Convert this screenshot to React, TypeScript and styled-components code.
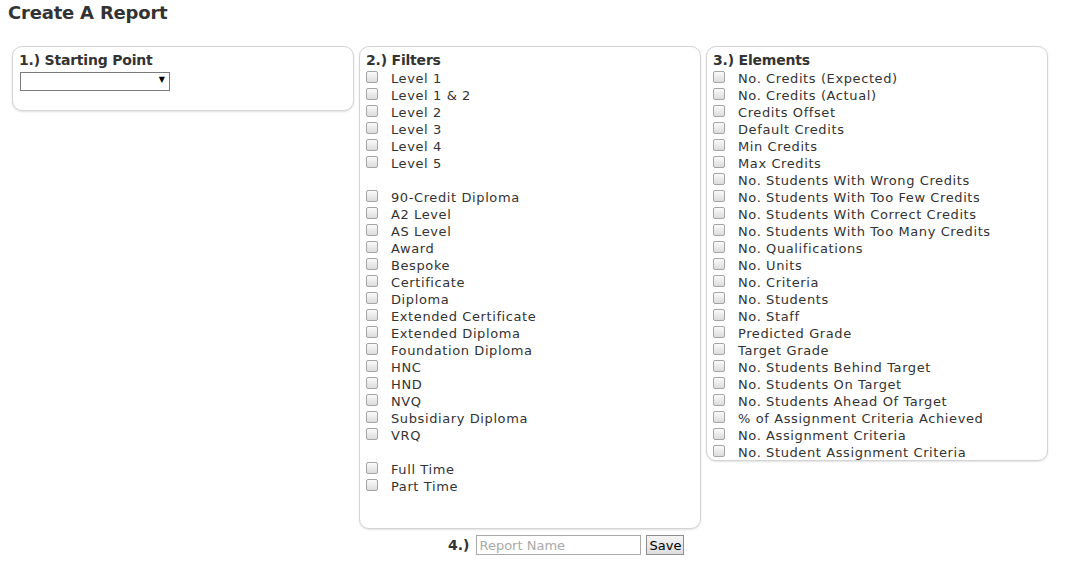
import styled, { createGlobalStyle } from 'styled-components';

const levels = ['Level 1', 'Level 1 & 2', 'Level 2', 'Level 3', 'Level 4', 'Level 5'];

const quals = [
  '90-Credit Diploma',
  'A2 Level',
  'AS Level',
  'Award',
  'Bespoke',
  'Certificate',
  'Diploma',
  'Extended Certificate',
  'Extended Diploma',
  'Foundation Diploma',
  'HNC',
  'HND',
  'NVQ',
  'Subsidiary Diploma',
  'VRQ',
];

const modes = ['Full Time', 'Part Time'];

const elements = [
  'No. Credits (Expected)',
  'No. Credits (Actual)',
  'Credits Offset',
  'Default Credits',
  'Min Credits',
  'Max Credits',
  'No. Students With Wrong Credits',
  'No. Students With Too Few Credits',
  'No. Students With Correct Credits',
  'No. Students With Too Many Credits',
  'No. Qualifications',
  'No. Units',
  'No. Criteria',
  'No. Students',
  'No. Staff',
  'Predicted Grade',
  'Target Grade',
  'No. Students Behind Target',
  'No. Students On Target',
  'No. Students Ahead Of Target',
  '% of Assignment Criteria Achieved',
  'No. Assignment Criteria',
  'No. Student Assignment Criteria',
];

function CheckList({ items }: { items: string[] }) {
  return (
    <>
      {items.map((item, key) => (
        <Row key={key}>
          <Check type="checkbox" />
          <span>{item}</span>
        </Row>
      ))}
    </>
  );
}

function App() {
  return (
    <Page>
      <GlobalStyle />
      <Title>Create A Report</Title>

      <Panels>
        <Panel>
          <PanelTitle>1.) Starting Point</PanelTitle>
          <SelectWrap>
            <Select defaultValue="">
              <option value=""></option>
            </Select>
            <Arrow>▼</Arrow>
          </SelectWrap>
          <Spacer $height={20} />
        </Panel>

        <Panel>
          <PanelTitle>2.) Filters</PanelTitle>
          <CheckList items={levels} />
          <Spacer $height={17} />
          <CheckList items={quals} />
          <Spacer $height={17} />
          <CheckList items={modes} />
          <Spacer $height={34} />
        </Panel>

        <Panel>
          <PanelTitle>3.) Elements</PanelTitle>
          <CheckList items={elements} />
        </Panel>
      </Panels>

      <Footer>
        <StepLabel>4.)</StepLabel>
        <NameInput placeholder="Report Name" />
        <SaveButton>Save</SaveButton>
      </Footer>
    </Page>
  );
}

export default App;

const GlobalStyle = createGlobalStyle`
  body {
    margin: 0;
    background: #fff;
    font-family: "DejaVu Sans", Verdana, sans-serif;
    color: #333;
  }
`;

const Page = styled.div`
  padding: 2px 8px;
`;

const Title = styled.h1`
  margin: 0;
  font-size: 18px;
  line-height: 22px;
  font-weight: bold;
  color: #333;
  letter-spacing: -0.2px;
`;

const Panels = styled.div`
  display: flex;
  align-items: flex-start;
  gap: 5px;
  margin: 22px 0 0 4px;
`;

const Panel = styled.div`
  box-sizing: border-box;
  width: 342px;
  padding: 5px 6px 0;
  border: 1px solid #d4d4d4;
  border-radius: 10px;
  box-shadow: 0 1px 2px rgba(0, 0, 0, 0.12);
  background: #fff;
`;

const PanelTitle = styled.div`
  font-size: 14px;
  line-height: 17px;
  font-weight: bold;
  color: #333;
  letter-spacing: -0.2px;
`;

const Row = styled.label`
  display: flex;
  align-items: center;
  height: 17px;
  font-size: 13px;
  letter-spacing: 0.6px;
  color: #333;
  white-space: nowrap;

  & > span {
    margin: 2px 0 0 13px;
  }
`;

const Check = styled.input`
  appearance: none;
  box-sizing: border-box;
  width: 12px;
  height: 12px;
  margin: -2px 0 0;
  border: 1px solid #a5a5a5;
  border-radius: 2px;
  background: linear-gradient(#fafafa, #dcdcdc);
  flex-shrink: 0;
`;

const Spacer = styled.div<{ $height: number }>`
  height: ${(p) => p.$height}px;
`;

const SelectWrap = styled.div`
  position: relative;
  width: 150px;
  height: 19px;
  margin: 2px 0 0 1px;
`;

const Select = styled.select`
  appearance: none;
  box-sizing: border-box;
  width: 150px;
  height: 19px;
  border: 1px solid #7a7a7a;
  border-radius: 0;
  background: #fff;
  font-family: inherit;
  font-size: 13px;
`;

const Arrow = styled.span`
  position: absolute;
  right: 5px;
  top: 4px;
  font-size: 8px;
  color: #000;
  pointer-events: none;
`;

const Footer = styled.div`
  display: flex;
  align-items: center;
  margin: 6px 0 0 440px;
`;

const StepLabel = styled.span`
  font-size: 14px;
  font-weight: bold;
  color: #333;
  margin-right: 7px;
`;

const NameInput = styled.input`
  box-sizing: border-box;
  width: 165px;
  height: 20px;
  padding: 0 2px;
  border: 1px solid #a9a9a9;
  font-family: inherit;
  font-size: 13px;
  color: #333;

  &::placeholder {
    color: #aaa;
  }
`;

const SaveButton = styled.button`
  box-sizing: border-box;
  height: 20px;
  margin-left: 5px;
  padding: 0 2px;
  border: 1px solid #8f8f8f;
  border-radius: 0;
  background: linear-gradient(#f4f4f4, #dedede);
  font-family: inherit;
  font-size: 13px;
  color: #000;
`;
